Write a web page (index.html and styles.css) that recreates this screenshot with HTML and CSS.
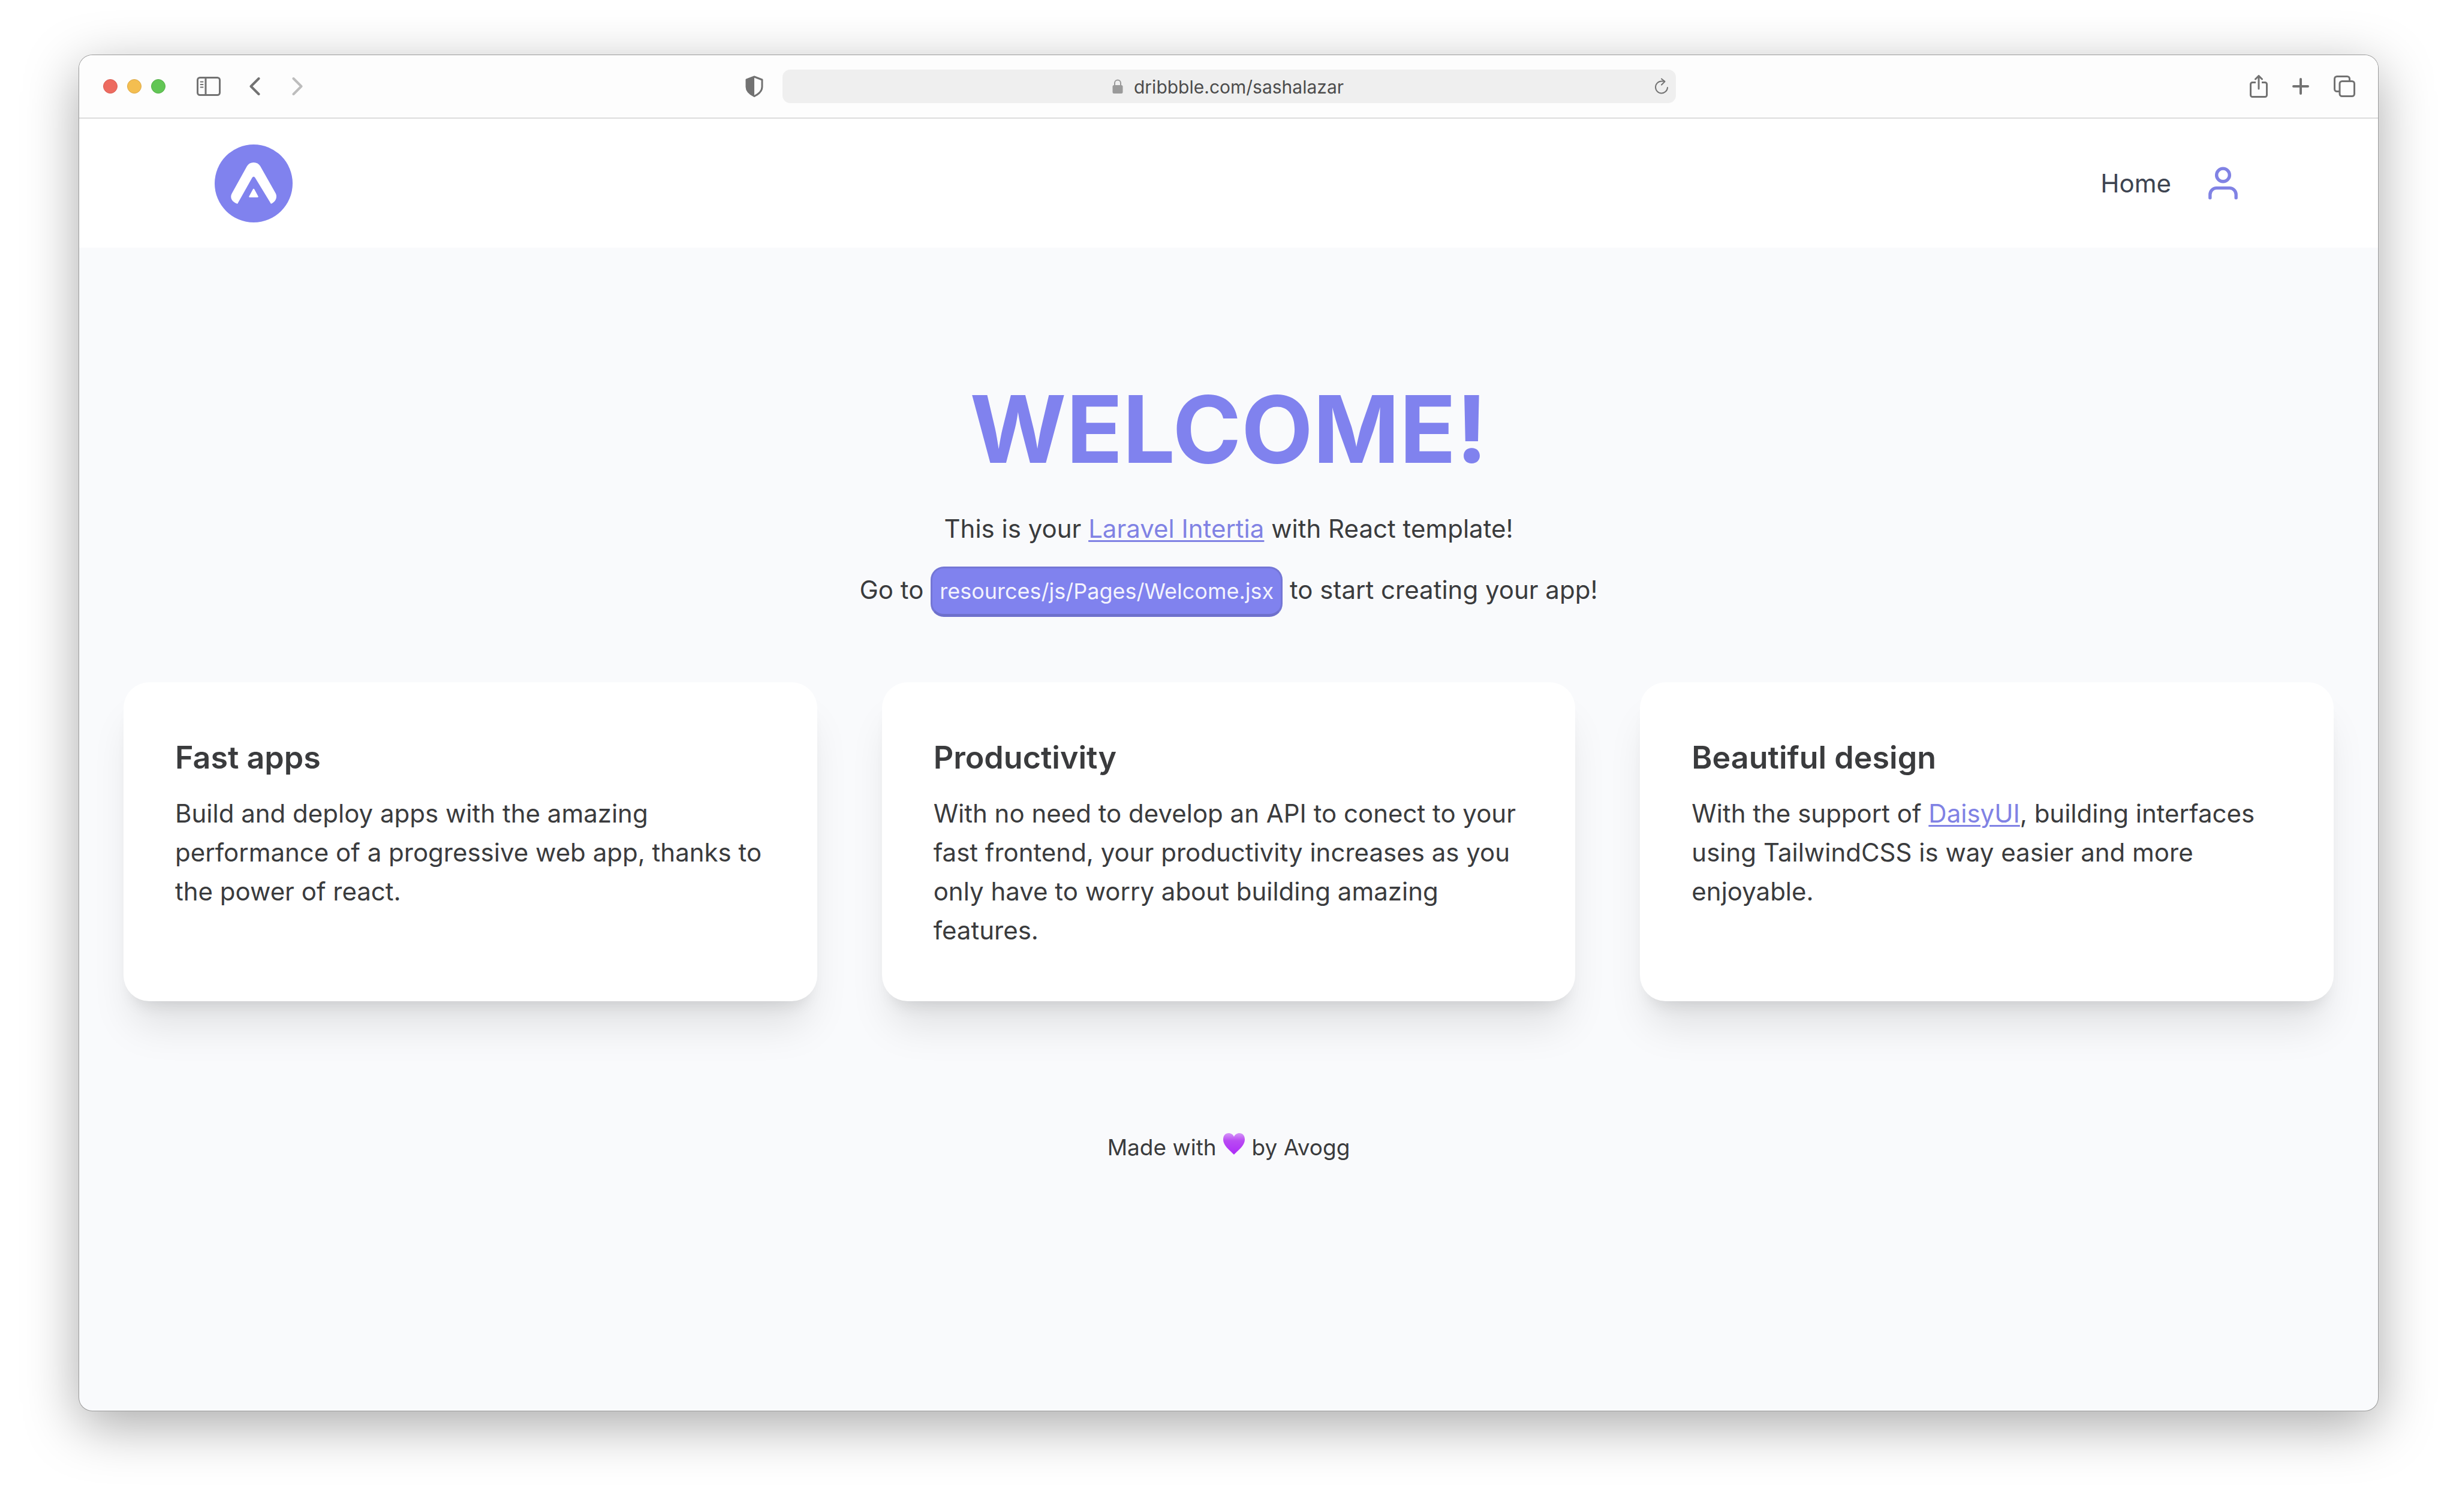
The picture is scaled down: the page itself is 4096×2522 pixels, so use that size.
FILE: index.html
```html
<!DOCTYPE html>
<html lang="en">
<head>
<meta charset="utf-8">
<title>Welcome</title>
<link rel="stylesheet" href="styles.css">
</head>
<body>
<div class="window">
  <div class="toolbar">
    <div class="toolbar-side">
      <div class="lights">
        <button class="light light-close" aria-label="Close"></button>
        <button class="light light-minimize" aria-label="Minimize"></button>
        <button class="light light-zoom" aria-label="Zoom"></button>
      </div>
      <button class="tool tool-sidebar" aria-label="Sidebar">
        <svg width="40" height="32" viewBox="0 0 40 32" fill="none" stroke="currentColor" stroke-width="3">
          <rect x="1.5" y="1.5" width="37" height="29" rx="4"/>
          <path d="M15 2v28"/>
          <path d="M6.500 8.500h4M6.500 13h4M6.500 17.500h4" stroke-width="2" stroke-linecap="round"/>
        </svg>
      </button>
      <div class="history">
        <button class="tool" aria-label="Back">
          <svg width="18" height="30" viewBox="0 0 18 30" fill="none" stroke="currentColor" stroke-width="4" stroke-linecap="round" stroke-linejoin="round"><path d="M15.500 2L2.500 15l13 13"/></svg>
        </button>
        <button class="tool tool-faded" aria-label="Forward">
          <svg width="18" height="30" viewBox="0 0 18 30" fill="none" stroke="currentColor" stroke-width="4" stroke-linecap="round" stroke-linejoin="round"><path d="M2.500 2l13 13-13 13"/></svg>
        </button>
      </div>
      <button class="tool tool-shield" aria-label="Privacy report">
        <svg width="30" height="36" viewBox="0 0 30 36">
          <path d="M15 2L28 7v12c0 7-6 12-13 15.500C8 31 2 26 2 19V7z" fill="none" stroke="currentColor" stroke-width="3" stroke-linejoin="round"/>
          <path d="M15 2v32C8 31 2 26 2 19V7z" fill="currentColor"/>
        </svg>
      </button>
    </div>
    <div class="address">
      <svg class="lock" width="18" height="24" viewBox="0 0 18 24">
        <rect x="0.500" y="10" width="17" height="14" rx="2.500" fill="currentColor"/>
        <path d="M4 11V6.500a5 5 0 0 1 10 0V11" fill="none" stroke="currentColor" stroke-width="2"/>
      </svg>
      <input class="url" type="text" value="dribbble.com/sashalazar" aria-label="Address">
      <button class="reload" aria-label="Reload">
        <svg width="24" height="28" viewBox="0 0 24 28" fill="none" stroke="currentColor" stroke-width="2" stroke-linecap="round" stroke-linejoin="round">
          <path d="M22 16a10 10 0 1 1-10-10.500h5"/>
          <path d="M12 1.500l5.500 4.500-5.500 5.500"/>
        </svg>
      </button>
    </div>
    <div class="toolbar-side toolbar-right">
      <button class="tool" aria-label="Share">
        <svg width="30" height="38" viewBox="0 0 30 38" fill="none" stroke="currentColor" stroke-width="3" stroke-linecap="round" stroke-linejoin="round">
          <path d="M10 12.500H4.500a3 3 0 0 0-3 3v18a3 3 0 0 0 3 3h21a3 3 0 0 0 3-3v-18a3 3 0 0 0-3-3H20" stroke-linecap="butt"/>
          <path d="M15 23V2M9.500 7L15 1.500 20.500 7"/>
        </svg>
      </button>
      <button class="tool" aria-label="New tab">
        <svg width="28" height="30" viewBox="0 0 28 30" fill="none" stroke="currentColor" stroke-width="4" stroke-linecap="round"><path d="M14 3v24M2 15h24"/></svg>
      </button>
      <button class="tool" aria-label="Tab overview">
        <svg width="36" height="36" viewBox="0 0 36 36" fill="none" stroke="currentColor" stroke-width="3">
          <rect x="10" y="9.500" width="24.500" height="25" rx="4"/>
          <path d="M26.500 9V5.500a4 4 0 0 0-4-4h-17a4 4 0 0 0-4 4v17a4 4 0 0 0 4 4H9"/>
        </svg>
      </button>
    </div>
  </div>

  <header class="navbar">
    <a class="logo" href="#" aria-label="Avogg">
      <svg width="130" height="130" viewBox="0 0 130 130">
        <circle cx="65" cy="65" r="65" fill="#8082ee"/>
        <path d="M65 30c5 0 8.500 2 11 6l26 46c3 7-1 14-8 17L67.500 55.500c-1.500-2.500-3.500-2.500-5 0L38 99c-9-3-13-10-9.500-17L54 36c2.500-4 6-6 11-6z" fill="#fff"/>
        <path d="M65 75l6.500 12H58.500z" fill="#fff" stroke="#fff" stroke-width="2.500" stroke-linejoin="round"/>
      </svg>
    </a>
    <nav class="menu">
      <a class="menu-link" href="#">Home</a>
      <a class="menu-user" href="#" aria-label="Account">
        <svg width="65" height="65" viewBox="0 0 24 24" fill="none" stroke="currentColor" stroke-width="2" stroke-linecap="round" stroke-linejoin="round"><path d="M20 21v-2a4 4 0 0 0-4-4H8a4 4 0 0 0-4 4v2"/><circle cx="12" cy="7" r="4"/></svg>
      </a>
    </nav>
  </header>

  <main class="page">
    <section class="hero">
      <h1 class="hero-title">WELCOME!</h1>
      <p class="hero-text">This is your <a class="link" href="#">Laravel Intertia</a> with React template!</p>
      <p class="hero-text">Go to <kbd class="kbd">resources/js/Pages/Welcome.jsx</kbd> to start creating your app!</p>
    </section>
    <section class="cards">
      <article class="card">
        <h2 class="card-title">Fast apps</h2>
        <p class="card-text">Build and deploy apps with the amazing performance of a progressive web app, thanks to the power of react.</p>
      </article>
      <article class="card">
        <h2 class="card-title">Productivity</h2>
        <p class="card-text">With no need to develop an API to conect to your fast frontend, your productivity increases as you only have to worry about building amazing features.</p>
      </article>
      <article class="card">
        <h2 class="card-title">Beautiful design</h2>
        <p class="card-text">With the support of <a class="link" href="#">DaisyUI</a>, building interfaces using TailwindCSS is way easier and more enjoyable.</p>
      </article>
    </section>
    <footer class="footer">
      Made with
      <svg class="heart" width="38" height="38" viewBox="0 0 38 38" role="img" aria-label="love">
        <defs>
          <linearGradient id="heart-fill" x1="0" y1="0" x2="0" y2="1">
            <stop offset="0" stop-color="#d596f8"/>
            <stop offset="0.350" stop-color="#b94bf3"/>
            <stop offset="1" stop-color="#ad2bf8"/>
          </linearGradient>
        </defs>
        <path d="M19 37C14 31 1 23 1 11.500 1 5 5 1 10 1c4 0 7.500 2.500 9 6 1.500-3.500 5-6 9-6 5 0 9 4 9 10.500C37 23 24 31 19 37z" fill="url(#heart-fill)"/>
      </svg>
      by Avogg
    </footer>
  </main>
</div>
</body>
</html>
```
FILE: styles.css
```css
* {
  box-sizing: border-box;
}

body {
  display: flex;
  min-height: 100vh;
  margin: 0;
  padding: 92px 130px 169px 132px;
  background: #fff;
  color: #3a3b3d;
  font-family: Inter, "Liberation Sans", sans-serif;
  font-size: 42px;
  line-height: 65px;
}

h1, h2, p {
  margin: 0;
}

button {
  padding: 0;
  border: 0;
  background: none;
  color: inherit;
}

svg {
  display: block;
}

.window {
  display: flex;
  flex: 1;
  flex-direction: column;
  overflow: hidden;
  border-radius: 22px;
  background: #f9fafc;
  box-shadow: 0 0 0 1px #9b9b9b, 0 24px 90px rgba(0, 0, 0, 0.34);
}

/* Browser toolbar */

.toolbar {
  display: grid;
  grid-template-columns: 38fr 50fr 38fr;
  align-items: center;
  height: 106px;
  padding: 0 38px 0 40px;
  border-bottom: 2px solid #dcdcdc;
  background: #fdfdfd;
  color: #727272;
}

.toolbar-side {
  display: flex;
  align-items: center;
}

.toolbar-right {
  justify-content: flex-end;
  gap: 41px;
}

.lights {
  display: flex;
  gap: 16px;
}

.light {
  width: 24px;
  height: 24px;
  border: 1px solid;
  border-radius: 50%;
}

.light-close {
  border-color: #d95e54;
  background: #ed6b60;
}

.light-minimize {
  border-color: #dca848;
  background: #f4be50;
}

.light-zoom {
  border-color: #55ae49;
  background: #62c655;
}

.tool-sidebar {
  margin-left: 52px;
}

.history {
  display: flex;
  gap: 53px;
  margin-left: 48px;
}

.tool-faded {
  color: #bdbdbd;
}

.tool-shield {
  margin: 0 32px 0 auto;
}

.address {
  display: grid;
  grid-template-columns: 1fr auto auto 1fr;
  align-items: center;
  height: 56px;
  padding: 0 12px;
  border-radius: 13px;
  background: #efefef;
}

.lock {
  grid-column: 2;
  margin-right: 18px;
  color: #9a9a9a;
}

.url {
  width: 354px;
  padding: 2px 0 0;
  border: 0;
  background: none;
  color: #4c4c4c;
  font: 30px/40px Inter, "Liberation Sans", sans-serif;
}

.reload {
  justify-self: end;
}

/* Site header */

.navbar {
  display: flex;
  align-items: center;
  justify-content: space-between;
  height: 215px;
  padding: 0 226px;
  background: #fff;
}

.menu {
  display: flex;
  align-items: center;
  gap: 54px;
}

.menu-link {
  color: #3d4451;
  text-decoration: none;
}

.menu-user {
  color: #8082e4;
}

/* Welcome page */

.page {
  padding: 221px 74px 108px;
}

.hero {
  text-align: center;
}

.hero-title {
  margin-bottom: 52px;
  color: #8082ee;
  font-size: 155px;
  font-weight: 700;
  line-height: 163px;
}

.hero-text + .hero-text {
  margin-top: 31px;
}

.link {
  color: #8082e4;
  text-decoration-thickness: 3px;
  text-underline-offset: 4px;
}

.kbd {
  display: inline-flex;
  align-items: center;
  height: 84px;
  padding: 0 12px;
  border: 3px solid #7476d6;
  border-bottom: 5px solid #6e70cc;
  border-radius: 22px;
  background: #8082ee;
  color: #f3f3fd;
  font-family: inherit;
  font-size: 36px;
}

.cards {
  display: grid;
  grid-template-columns: repeat(3, 1fr);
  gap: 108px;
  margin-top: 109px;
}

.card {
  padding: 88px 86px 86px;
  border-radius: 43px;
  background: #fff;
  box-shadow: 0 54px 68px -14px rgba(0, 0, 0, 0.1), 0 22px 27px -16px rgba(0, 0, 0, 0.1);
}

.card-title {
  margin-bottom: 22px;
  font-size: 52px;
  font-weight: 600;
  line-height: 76px;
}

.footer {
  margin-top: 217px;
  font-size: 37px;
  line-height: 54px;
  text-align: center;
}

.heart {
  display: inline-block;
  vertical-align: baseline;
}
```
